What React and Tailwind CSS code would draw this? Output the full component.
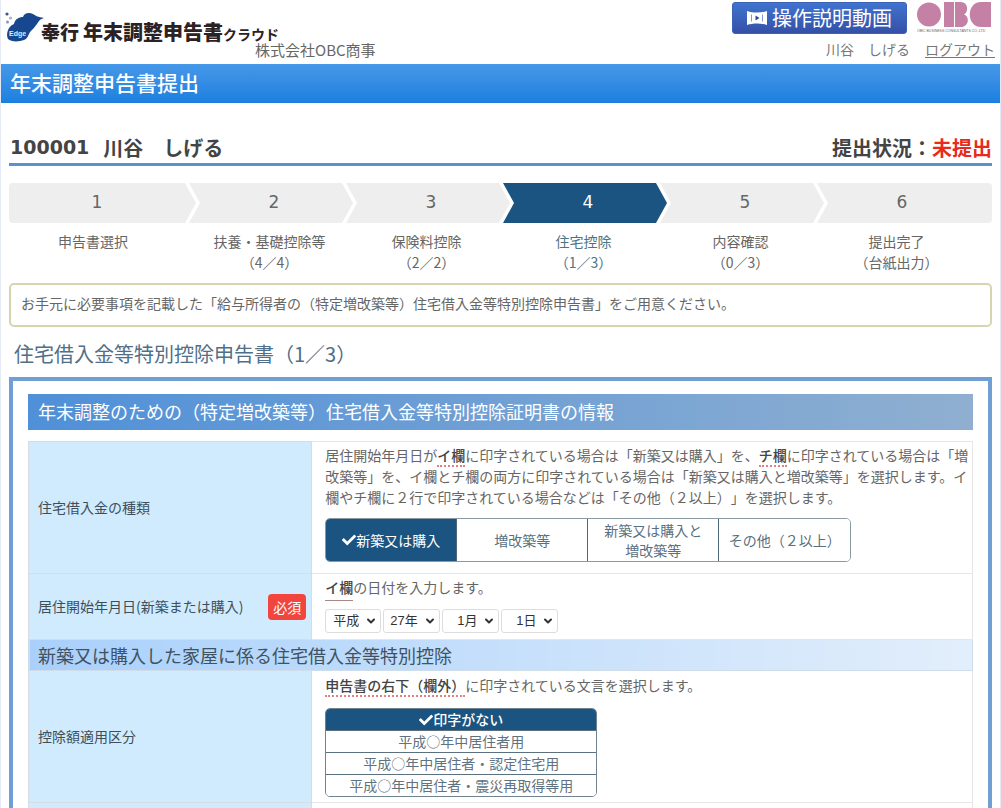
import { FaCheck } from 'react-icons/fa'
import { ChevronDown } from 'lucide-react'

const steps = [
  { no: 1, label: '申告書選択' },
  { no: 2, label: '扶養・基礎控除等', sub: '（4／4）' },
  { no: 3, label: '保険料控除', sub: '（2／2）' },
  { no: 4, label: '住宅控除', sub: '（1／3）', active: true },
  { no: 5, label: '内容確認', sub: '（0／3）' },
  { no: 6, label: '提出完了', sub: '（台紙出力）' },
]

const loanTypes = ['新築又は購入', '増改築等', '新築又は購入と\n増改築等', 'その他（２以上）']

const deductionTypes = [
  '印字がない',
  '平成○年中居住者用',
  '平成○年中居住者・認定住宅用',
  '平成○年中居住者・震災再取得等用',
]

const dateFields = [
  { name: '元号', value: '平成', width: 'w-[56px] pl-[7px]' },
  { name: '年', value: '27年', width: 'w-[57px] pl-[6px]' },
  { name: '月', value: '1月', width: 'w-[57px] pl-[14px]' },
  { name: '日', value: '1日', width: 'w-[57px] pl-[14px]' },
]

const EdgeMark = () => (
  <svg viewBox="0 0 40 30" className="mt-3 h-[30px] w-10" aria-hidden="true">
    <path
      d="M3 27c-2-4-1-12 6-15 1-5 5-7 9-7 1-4 6-5 10-3 3 2 5 3 11 4-4 1-5 3-7 6-3 4-4 5-7 8-2 4-3 7-6 8-5 2-13 2-16-1z"
      fill="#16478f"
    />
    <circle cx="2" cy="2" r="1.6" fill="#44528a" />
    <circle cx="5.5" cy="6" r="1.6" fill="#a9b4cf" />
    <circle cx="2.5" cy="10" r="1.5" fill="#8a97bd" />
    <text x="4" y="24" fontSize="7" fontWeight="700" fill="#d5ecff" fontFamily="Liberation Sans, sans-serif">
      Edge
    </text>
  </svg>
)

const ObcLogo = () => (
  <svg viewBox="0 0 74 31" className="h-[31px] w-[74px]" role="img" aria-label="OBC">
    <g fill="#c481a5">
      <ellipse cx="12" cy="12.5" rx="12" ry="12" />
      <path d="M27 0h10v25H27zM38 0h6c7 0 8 10 3 12.5 6 2 5 12.5-3 12.5h-6z" />
      <path d="M74 0v25H64c-15 0-15-25 0-25z" />
    </g>
    <text x="0" y="30" fontSize="3.5" fill="#666" fontFamily="Liberation Sans, sans-serif">
      OBIC BUSINESS CONSULTANTS CO.,LTD
    </text>
  </svg>
)

const MovieIcon = () => (
  <svg viewBox="0 0 20 14" className="h-[14px] w-5" aria-hidden="true">
    <path d="M0 0c6 2 14 2 20 0v14c-6-2-14-2-20 0z" fill="#fff" />
    <path d="M4.5 3.5v7M15.5 3.5v7" stroke="#7f9bd6" />
    <path d="M8.5 4.5l4 2.5-4 2.5z" fill="#2c4a94" />
  </svg>
)

const stepShape = (i) => {
  if (i === 0)
    return 'rounded-l-[4px] -mr-[7px] pr-[11px] [clip-path:polygon(0_0,calc(100%-11px)_0,100%_50%,calc(100%-11px)_100%,0_100%)]'
  if (i === steps.length - 1) return 'rounded-r-[4px] pl-[11px] pr-4 [clip-path:polygon(0_0,100%_0,100%_100%,0_100%,11px_50%)]'
  return '-mr-[7px] pl-[11px] pr-[5px] [clip-path:polygon(0_0,calc(100%-11px)_0,100%_50%,calc(100%-11px)_100%,0_100%,11px_50%)]'
}

const labelPadding = (i) => {
  if (i === 0) return 'pr-3'
  return i === steps.length - 1 ? 'pr-4' : 'pl-1'
}

const EdgeTitle = () => (
  <div className="-ml-1 flex flex-col pt-[18px]">
    <h1 className="flex items-baseline font-black leading-[27px] text-[#2c2224]">
      <span className="mr-1 text-[19px]">奉行</span>
      <span className="text-xl">年末調整申告書</span>
      <span className="text-[14px] font-bold">クラウド</span>
    </h1>
    <p className="-mt-[7px] pl-[214px] text-[15px] leading-[18px] text-[#666]">株式会社OBC商事</p>
  </div>
)

const Header = () => (
  <header className="flex h-16 justify-between pl-1 pr-[5px]">
    <div className="flex items-start">
      <EdgeMark />
      <EdgeTitle />
    </div>
    <div className="flex flex-col items-end">
      <div className="flex items-start gap-[10px] pr-1 pt-[2px]">
        <button
          type="button"
          className="flex h-8 w-[175px] items-center justify-center gap-[5px] rounded-[3px] border border-[#3b62b5] bg-linear-to-b from-[#3f74cf] to-[#3550a8] text-xl text-white"
        >
          <MovieIcon />
          操作説明動画
        </button>
        <ObcLogo />
      </div>
      <div className="mt-[5px] flex gap-[15px] text-[#777]">
        <span>川谷　しげる</span>
        <a href="#logout" className="underline underline-offset-2">
          ログアウト
        </a>
      </div>
    </div>
  </header>
)

const Steps = () => (
  <ol className="mt-[17px] grid grid-cols-[180fr_157fr_157fr_157fr_157fr_175fr]">
    {steps.map((step, i) => (
      <li key={step.no} className="text-center" aria-current={step.active ? 'step' : undefined}>
        <div
          className={`h-10 font-[DejaVu_Sans] text-[17px] leading-[38px] ${stepShape(i)} ${
            step.active ? 'bg-[#1b5480] text-white' : 'bg-[#eeeeee] text-[#666]'
          }`}
        >
          {step.no}
        </div>
        <div className={`mt-2 ${labelPadding(i)} ${step.active ? 'text-[#4d7484]' : 'text-[#666]'}`}>
          {step.label}
          <br />
          {step.sub}
        </div>
      </li>
    ))}
  </ol>
)

const Term = ({ children, solid }) => (
  <span
    className={`font-medium text-[#444] ${
      solid ? 'border-b border-[#a88] pb-[3px]' : 'border-b-2 border-dotted border-[#e08080]'
    }`}
  >
    {children}
  </span>
)

const LabelCell = ({ children, required }) => (
  <th scope="row" className="border border-[#d5dde3] bg-[#d0ebfd] pl-[9px] pr-[5px] text-left font-normal text-[#3f4f5a]">
    <div className="flex items-center justify-between">
      <span>{children}</span>
      {required && <span className="rounded-[4px] bg-[#f2453d] px-[5px] py-[3px] leading-5 text-white">必須</span>}
    </div>
  </th>
)

const App = () => {
  return (
    <div className="border-x border-[#e3e9f5] bg-white font-['Noto_Sans_CJK_JP',sans-serif] text-[14px] leading-[21px] text-[#666] [text-spacing-trim:space-all]">
      <Header />
      <h2 className="h-[39px] bg-linear-to-b from-[#4698e8] to-[#1b7fdf] pl-[9px] text-[21px] font-medium leading-[36px] text-white">
        年末調整申告書提出
      </h2>

      <main className="px-2">
        <div className="mt-[29px] flex justify-between border-b-[3px] border-[#5b92cc] text-xl font-bold leading-[31px] text-[#444]">
          <p className="flex gap-[14px] pl-px">
            <span className="font-[DejaVu_Sans] text-[19px]">100001</span>
            <span>川谷　しげる</span>
          </p>
          <p>
            提出状況：<span className="text-[#e92a1c]">未提出</span>
          </p>
        </div>

        <Steps />

        <p className="mt-[10px] rounded-[5px] border-2 border-[#d5d5b2] px-[10px] pb-[11px] pt-2">
          お手元に必要事項を記載した「給与所得者の（特定増改築等）住宅借入金等特別控除申告書」をご用意ください。
        </p>

        <h3 className="mb-2 mt-3 pl-[5px] text-xl leading-[30px] text-[#4f7088]">住宅借入金等特別控除申告書（1／3）</h3>

        <section className="border-4 border-b-0 border-[#6f9fd3] px-[15px] pt-[13px]">
          <h4 className="mb-[11px] h-9 bg-linear-to-r from-[#4f90d8] to-[#8fafd0] pl-[10px] text-lg leading-[34px] text-white">
            年末調整のための（特定増改築等）住宅借入金等特別控除証明書の情報
          </h4>

          <table className="w-full border-collapse">
            <colgroup>
              <col className="w-[30%]" />
              <col />
            </colgroup>
            <tbody>
              <tr>
                <LabelCell>住宅借入金の種類</LabelCell>
                <td className="border border-[#e6e6e6] pb-[11px] pl-[13px] pt-[3px]">
                  <p>
                    居住開始年月日が<Term>イ欄</Term>に印字されている場合は「新築又は購入」を、<Term>チ欄</Term>
                    に印字されている場合は「増改築等」を、イ欄とチ欄の両方に印字されている場合は「新築又は購入と増改築等」を選択します。イ欄やチ欄に２行で印字されている場合などは「その他（２以上）」を選択します。
                  </p>
                  <div className="mt-[10px] inline-grid grid-cols-4 divide-x divide-[#4d6879] overflow-hidden rounded-[5px] border border-[#8a9aa3] align-top">
                    {loanTypes.map((type, i) => (
                      <button
                        key={type}
                        type="button"
                        aria-pressed={i === 0}
                        className={`flex min-h-[42px] w-[131px] items-center justify-center whitespace-pre-line leading-5 ${
                          i === 0 ? 'bg-[#1b5480] text-white' : 'bg-white text-[#5a7080]'
                        }`}
                      >
                        {i === 0 && <FaCheck className="size-[14px]" />}
                        {type}
                      </button>
                    ))}
                  </div>
                </td>
              </tr>
              <tr>
                <LabelCell required>居住開始年月日(新築または購入)</LabelCell>
                <td className="border border-[#e6e6e6] pb-[6px] pl-[13px] pt-[3px]">
                  <p>
                    <Term solid>イ欄</Term>の日付を入力します。
                  </p>
                  <div className="mt-[11px] flex gap-[2px]">
                    {dateFields.map((field) => (
                      <div key={field.name} className="relative">
                        <select
                          aria-label={field.name}
                          className={`block h-6 appearance-none rounded-[3px] border border-[#ddd] bg-white font-['Liberation_Sans','Noto_Sans_CJK_JP',sans-serif] text-[13px] leading-[22px] text-[#333] ${field.width}`}
                        >
                          <option>{field.value}</option>
                        </select>
                        <ChevronDown
                          className="pointer-events-none absolute right-1 top-[6px] size-3 text-[#333]"
                          strokeWidth={4}
                        />
                      </div>
                    ))}
                  </div>
                </td>
              </tr>
              <tr>
                <th
                  colSpan={2}
                  scope="colgroup"
                  className="h-[31px] border border-[#cfdcea] bg-linear-to-r from-[#a9d0fb] to-[#e2eefb] pl-[9px] text-left text-lg font-normal leading-[30px] text-[#3f5263]"
                >
                  新築又は購入した家屋に係る住宅借入金等特別控除
                </th>
              </tr>
              <tr>
                <LabelCell>控除額適用区分</LabelCell>
                <td className="border border-[#e6e6e6] pb-[5px] pl-[13px] pt-1">
                  <p>
                    <Term>申告書の右下（欄外）</Term>に印字されている文言を選択します。
                  </p>
                  <div className="mt-3 flex w-[272px] flex-col divide-y divide-[#5b7180] overflow-hidden rounded-[5px] border border-[#6f8290]">
                    {deductionTypes.map((type, i) => (
                      <button
                        key={type}
                        type="button"
                        aria-pressed={i === 0}
                        className={`flex items-center justify-center ${
                          i === 0 ? 'bg-[#1b5480] font-medium text-white' : 'bg-white text-[#5f7280]'
                        }`}
                      >
                        {i === 0 && <FaCheck className="size-[14px]" />}
                        {type}
                      </button>
                    ))}
                  </div>
                </td>
              </tr>
              <tr className="h-10">
                <LabelCell />
                <td className="border border-[#e6e6e6]" />
              </tr>
            </tbody>
          </table>
        </section>
      </main>
    </div>
  )
}

export default App
